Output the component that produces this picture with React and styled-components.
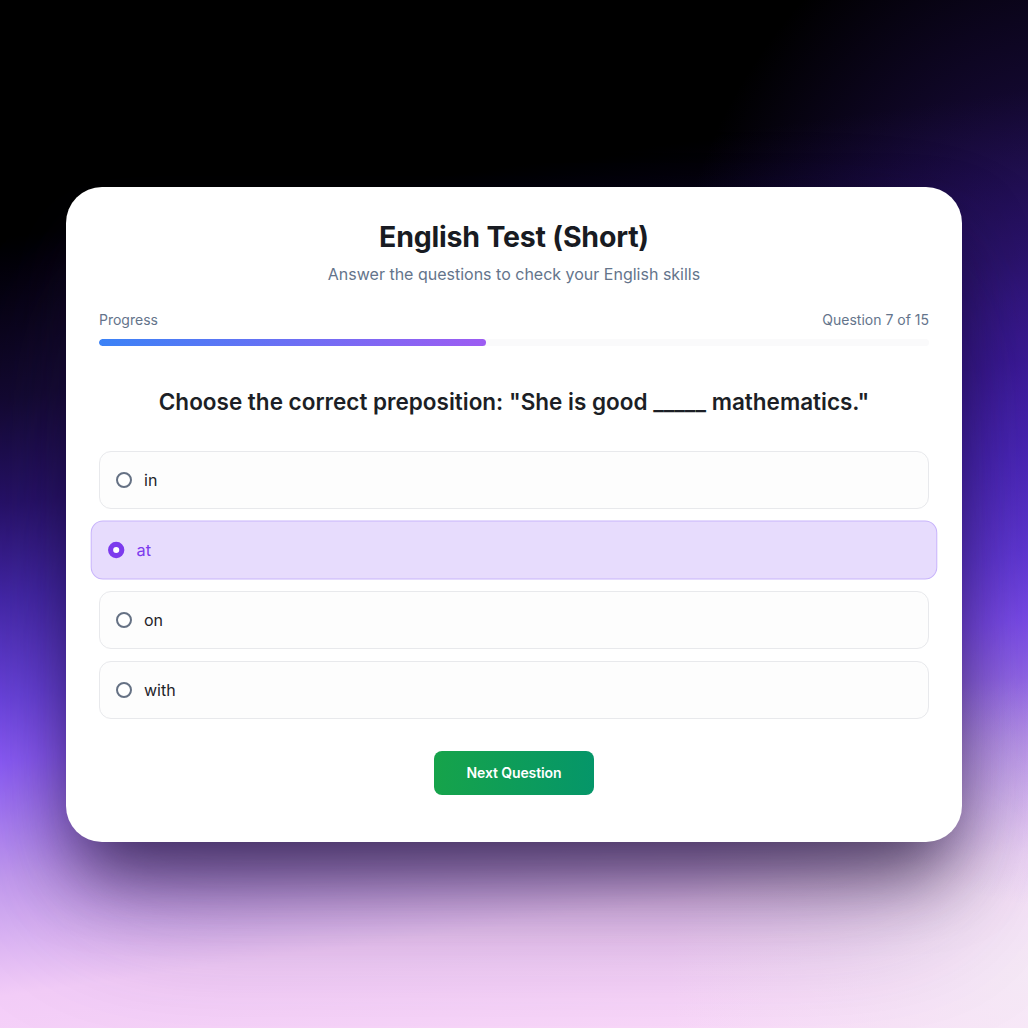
import React, { useState } from "react";
import styled, { createGlobalStyle } from "styled-components";

const Global = createGlobalStyle`
  * { box-sizing: border-box; }
  html, body { margin: 0; padding: 0; }
  body {
    font-family: Inter, "Noto Sans", "Liberation Sans", sans-serif;
    background: #000;
  }
`;

const Page = styled.div`
  min-height: 100vh;
  display: flex;
  align-items: center;
  justify-content: center;
  background:
    radial-gradient(ellipse 420px 520px at 105% 38%, rgba(80, 34, 200, 0.55), rgba(80, 34, 200, 0) 100%),
    radial-gradient(ellipse 360px 300px at 100% 95%, rgba(245, 236, 246, 0.85), rgba(245, 236, 246, 0) 100%),
    linear-gradient(
      172deg,
      #000000 0%,
      #000000 20%,
      #130a30 34%,
      #271268 43%,
      #4428a8 51%,
      #6a44dc 59.5%,
      #8b5cf6 65%,
      #c49cf0 75%,
      #f3cdf8 85%,
      #fcdcfa 100%
    );
`;

const Card = styled.div`
  width: 896px;
  background: #ffffff;
  border-radius: 36px;
  padding: 32px 33px 47px;
  box-shadow: 0 40px 70px -10px rgba(18, 8, 40, 0.65),
    0 80px 140px -20px rgba(40, 20, 90, 0.35);
  display: flex;
  flex-direction: column;
`;

const Header = styled.header`
  text-align: center;
  margin-bottom: 25px;
`;

const Title = styled.h1`
  margin: 0;
  font-size: 28.5px;
  line-height: 36px;
  font-weight: 700;
  color: #181b22;
  letter-spacing: -0.2px;
`;

const Subtitle = styled.p`
  margin: 8px 0 0;
  font-size: 16px;
  line-height: 22px;
  color: #64748b;
`;

const ProgressRow = styled.div`
  display: flex;
  justify-content: space-between;
  font-size: 14px;
  line-height: 20px;
  color: #64748b;
  margin-bottom: 9px;
`;

const Track = styled.div`
  height: 7px;
  border-radius: 999px;
  background: #fafafb;
  overflow: hidden;
`;

const Fill = styled.div`
  height: 100%;
  border-radius: 999px;
  background: linear-gradient(90deg, #3b82f6, #9d5cf2);
`;

const Question = styled.h2`
  margin: 41px 0 34px;
  text-align: center;
  font-size: 22.5px;
  line-height: 30px;
  font-weight: 600;
  color: #1c1f26;
`;

const Options = styled.div`
  display: flex;
  flex-direction: column;
  gap: 12px;
`;

const Option = styled.button`
  display: flex;
  align-items: center;
  gap: 12px;
  height: 58px;
  padding: 0 16px;
  width: 100%;
  font-family: inherit;
  font-size: 16px;
  text-align: left;
  cursor: pointer;
  border-radius: 12px;
  border: 1px solid ${(p) => (p.$selected ? "#c8b4fb" : "#e8e9ec")};
  background: ${(p) => (p.$selected ? "#e7dcfd" : "#fdfdfd")};
  color: ${(p) => (p.$selected ? "#7c3aed" : "#1f2329")};
  transform: ${(p) => (p.$selected ? "scale(1.02)" : "none")};
`;

const Radio = styled.span`
  width: 16px;
  height: 16px;
  border-radius: 50%;
  flex-shrink: 0;
  background: #fff;
  border: ${(p) => (p.$selected ? "5px solid #7c3aed" : "2px solid #657184")};
`;

const Footer = styled.div`
  display: flex;
  justify-content: center;
  margin-top: 32px;
`;

const NextButton = styled.button`
  width: 160px;
  height: 44px;
  padding: 0;
  white-space: nowrap;
  border: none;
  border-radius: 8px;
  font-family: inherit;
  font-size: 14px;
  line-height: 20px;
  font-weight: 600;
  letter-spacing: -0.1px;
  color: #fff;
  background: linear-gradient(90deg, #16a34a, #059669);
  cursor: pointer;
`;

const options = ["in", "at", "on", "with"];

export default function App() {
  const [selected, setSelected] = useState(1);
  const current = 7;
  const total = 15;
  return (
    <Page>
      <Global />
      <Card>
        <Header>
          <Title>English Test (Short)</Title>
          <Subtitle>Answer the questions to check your English skills</Subtitle>
        </Header>
        <ProgressRow>
          <span>Progress</span>
          <span>
            Question {current} of {total}
          </span>
        </ProgressRow>
        <Track>
          <Fill style={{ width: `${(current / total) * 100}%` }} />
        </Track>
        <Question>
          Choose the correct preposition: "She is good _____ mathematics."
        </Question>
        <Options>
          {options.map((o, i) => (
            <Option key={o} $selected={i === selected} onClick={() => setSelected(i)}>
              <Radio $selected={i === selected} />
              {o}
            </Option>
          ))}
        </Options>
        <Footer>
          <NextButton>Next Question</NextButton>
        </Footer>
      </Card>
    </Page>
  );
}
